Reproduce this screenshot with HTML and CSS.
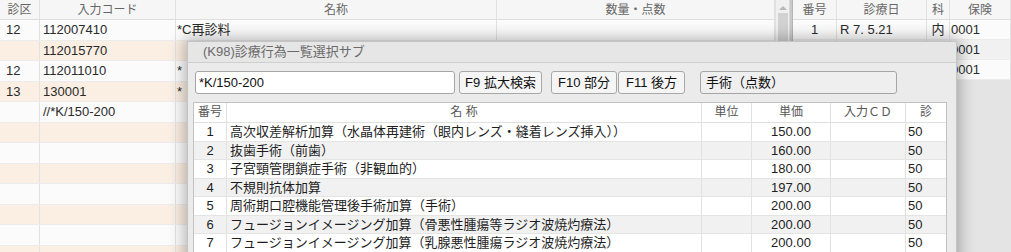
FILE: index.html
```html
<!DOCTYPE html>
<html lang="ja">
<head>
<meta charset="utf-8">
<title>診療行為一覧選択</title>
<link rel="stylesheet" href="styles.css">
</head>
<body>
<div class="app">
  <div class="left">
    <div class="lgrid lhead">
      <div class="c ctr">診区</div><div class="c ctr">入力コード</div><div class="c ctr">名称</div><div class="c ctr">数量・点数</div>
    </div>
    <div class="lgrid lrow w"><div class="c p6">12</div><div class="c p3">112007410</div><div class="c p1">*C再診料</div><div class="c"></div></div>
    <div class="lgrid lrow o"><div class="c"></div><div class="c p3">112015770</div><div class="c"></div><div class="c"></div></div>
    <div class="lgrid lrow w"><div class="c p6">12</div><div class="c p3">112011010</div><div class="c p1">*</div><div class="c"></div></div>
    <div class="lgrid lrow o"><div class="c p6">13</div><div class="c p3">130001</div><div class="c p1">*</div><div class="c"></div></div>
    <div class="lgrid lrow w"><div class="c"></div><div class="c p3">//*K/150-200</div><div class="c"></div><div class="c"></div></div>
    <div class="lgrid lrow o"><div class="c"></div><div class="c"></div><div class="c"></div><div class="c"></div></div>
    <div class="lgrid lrow w"><div class="c"></div><div class="c"></div><div class="c"></div><div class="c"></div></div>
    <div class="lgrid lrow o"><div class="c"></div><div class="c"></div><div class="c"></div><div class="c"></div></div>
    <div class="lgrid lrow w"><div class="c"></div><div class="c"></div><div class="c"></div><div class="c"></div></div>
    <div class="lgrid lrow o"><div class="c"></div><div class="c"></div><div class="c"></div><div class="c"></div></div>
    <div class="lgrid lrow w"><div class="c"></div><div class="c"></div><div class="c"></div><div class="c"></div></div>
    <div class="lgrid lrow o"><div class="c"></div><div class="c"></div><div class="c"></div><div class="c"></div></div>
  </div>
  <div class="vscroll">
    <div class="arrow"></div>
    <div class="thumb"></div>
  </div>
  <div class="split"></div>
  <div class="right">
    <div class="rgrid rhead"><div class="c ctr">番号</div><div class="c ctr">診療日</div><div class="c ctr">科</div><div class="c ctr">保険</div></div>
    <div class="rgrid rrow"><div class="c ctr">1</div><div class="c p3">R 7. 5.21</div><div class="c ctr">内</div><div class="c p1">0001</div></div>
    <div class="rgrid rrow alt"><div class="c"></div><div class="c"></div><div class="c"></div><div class="c p1">0001</div></div>
    <div class="rgrid rrow"><div class="c"></div><div class="c"></div><div class="c"></div><div class="c p1">0001</div></div>
  </div>

  <div class="dialog">
    <div class="dtitle">(K98)診療行為一覧選択サブ</div>
    <div class="dbody">
      <div class="toolbar">
        <div class="input">*K/150-200</div>
        <div class="btn b9">F9 拡大検索</div>
        <div class="btn b10">F10 部分</div>
        <div class="btn b11">F11 後方</div>
        <div class="field">手術（点数）</div>
      </div>
      <div class="table">
        <div class="tgrid thead"><div class="c ctr">番号</div><div class="c ctr">名 称</div><div class="c ctr">単位</div><div class="c ctr">単価</div><div class="c ctr">入力ＣＤ</div><div class="c ctr">診</div></div>
        <div class="tgrid trow"><div class="c ctr">1</div><div class="c pn">高次収差解析加算（水晶体再建術（眼内レンズ・縫着レンズ挿入））</div><div class="c"></div><div class="c ctr">150.00</div><div class="c"></div><div class="c p2">50</div></div>
        <div class="tgrid trow alt"><div class="c ctr">2</div><div class="c pn">抜歯手術（前歯）</div><div class="c"></div><div class="c ctr">160.00</div><div class="c"></div><div class="c p2">50</div></div>
        <div class="tgrid trow"><div class="c ctr">3</div><div class="c pn">子宮頸管閉鎖症手術（非観血的）</div><div class="c"></div><div class="c ctr">180.00</div><div class="c"></div><div class="c p2">50</div></div>
        <div class="tgrid trow alt"><div class="c ctr">4</div><div class="c pn">不規則抗体加算</div><div class="c"></div><div class="c ctr">197.00</div><div class="c"></div><div class="c p2">50</div></div>
        <div class="tgrid trow"><div class="c ctr">5</div><div class="c pn">周術期口腔機能管理後手術加算（手術）</div><div class="c"></div><div class="c ctr">200.00</div><div class="c"></div><div class="c p2">50</div></div>
        <div class="tgrid trow alt"><div class="c ctr">6</div><div class="c pn">フュージョンイメージング加算（骨悪性腫瘍等ラジオ波焼灼療法）</div><div class="c"></div><div class="c ctr">200.00</div><div class="c"></div><div class="c p2">50</div></div>
        <div class="tgrid trow"><div class="c ctr">7</div><div class="c pn">フュージョンイメージング加算（乳腺悪性腫瘍ラジオ波焼灼療法）</div><div class="c"></div><div class="c ctr">200.00</div><div class="c"></div><div class="c p2">50</div></div>
        <div class="tgrid trow alt"><div class="c"></div><div class="c"></div><div class="c"></div><div class="c"></div><div class="c"></div><div class="c"></div></div>
      </div>
    </div>
  </div>
</div>
</body>
</html>
```

FILE: styles.css
```css
* { box-sizing: border-box; }
html, body { margin: 0; padding: 0; }
body {
  width: 1011px;
  height: 252px;
  overflow: hidden;
  font-family: "Liberation Sans", "Noto Sans CJK JP", sans-serif;
  font-size: 13px;
  color: #2a2a2a;
  background: #e4e4e4;
}
.app {
  position: relative;
  display: flex;
  width: 1011px;
  height: 252px;
  overflow: hidden;
}
.c {
  white-space: nowrap;
  overflow: hidden;
  border-right: 1px solid #e2e2e2;
}
.ctr { text-align: center; }
.p1 { padding-left: 1px; }
.p2 { padding-left: 2px; }
.p3 { padding-left: 3px; }
.p6 { padding-left: 6px; }
.pn { padding-left: 3px; }

/* left list */
.left {
  width: 775px;
  flex: none;
  background: #fbfbfb;
}
.lgrid {
  display: grid;
  grid-template-columns: 40px 136px 321px 278px;
}
.lhead {
  height: 20px;
  line-height: 20px;
  font-size: 12px;
  color: #666;
  background: #f6f6f6;
  border-bottom: 1px solid #dedede;
}
.lrow {
  height: 20.5px;
  line-height: 20px;
  border-bottom: 1px solid #ececec;
}
.lrow.w { background: #fbfbfb; }
.lrow.o { background: #fbeee2; }

/* scrollbar */
.vscroll {
  width: 14px;
  flex: none;
  background: #f0f0f0;
  border-left: 1px solid #e0e0e0;
}
.arrow {
  width: 0; height: 0;
  margin: 6px auto 0;
  border-left: 4px solid transparent;
  border-right: 4px solid transparent;
  border-bottom: 4px solid #b8b8b8;
}
.thumb {
  width: 10px;
  height: 120px;
  margin: 3px auto 0;
  background: #d2d2d2;
}
.split {
  width: 4px;
  flex: none;
  background: #c9c9c9;
  border-left: 1px solid #d8d8d8;
  border-right: 1px solid #b5b5b5;
}

/* right list */
.right {
  flex: 1;
  background: #e4e4e4;
}
.rgrid {
  display: grid;
  grid-template-columns: 44px 90px 23px 61px;
}
.rhead {
  height: 20px;
  line-height: 20px;
  font-size: 12px;
  color: #666;
  background: #f6f6f6;
  border-bottom: 1px solid #dedede;
}
.rrow {
  height: 20px;
  line-height: 19px;
  background: #fbfbfb;
  border-bottom: 1px solid #ececec;
}
.rrow.alt { background: #f1f1f1; }

/* dialog */
.dialog {
  position: absolute;
  left: 187px;
  top: 41px;
  width: 770px;
  height: 240px;
  background: #ebebeb;
  border: 1px solid #c4c4c4;
  box-shadow: 0 0 14px 3px rgba(0, 0, 0, 0.28);
}
.dtitle {
  height: 21px;
  line-height: 20px;
  padding-left: 15px;
  color: #6a6a6a;
  font-size: 13px;
  background: #e6e6e6;
  border-bottom: 1px solid #cfcfcf;
}
.dbody {
  padding: 8px 9px 0 5px;
}
.toolbar {
  display: flex;
  align-items: center;
  height: 23px;
  padding-left: 2px;
}
.input {
  width: 260px;
  height: 23px;
  line-height: 21px;
  padding-left: 3px;
  background: #fff;
  border: 1px solid #a5a5a5;
  border-radius: 3px;
  color: #111;
}
.btn {
  height: 23px;
  line-height: 21px;
  text-align: center;
  background: #f5f5f5;
  border: 1px solid #a8a8a8;
  border-radius: 3px;
  color: #111;
}
.b9 { width: 83px; margin-left: 4px; }
.b10 { width: 66px; margin-left: 9px; }
.b11 { width: 67px; margin-left: 1px; }
.field {
  width: 197px;
  height: 23px;
  line-height: 21px;
  margin-left: 15px;
  padding-left: 5px;
  background: #efefef;
  border: 1px solid #a5a5a5;
  border-radius: 3px;
  color: #111;
}
.table {
  margin-top: 8px;
  width: 754px;
  border: 1px solid #c2c2c2;
  background: #fff;
}
.tgrid {
  display: grid;
  grid-template-columns: 33px 475px 50px 79px 75px 40px;
}
.thead {
  height: 20px;
  line-height: 19px;
  font-size: 12px;
  color: #555;
  background: #fff;
  border-bottom: 1px solid #e0e0e0;
}
.trow {
  height: 18.5px;
  line-height: 17px;
  background: #fff;
  border-bottom: 1px solid #e4e4e4;
  color: #1e1e1e;
}
.trow.alt { background: #f1f1f1; }
.tgrid .c:last-child { border-right: none; }
```
